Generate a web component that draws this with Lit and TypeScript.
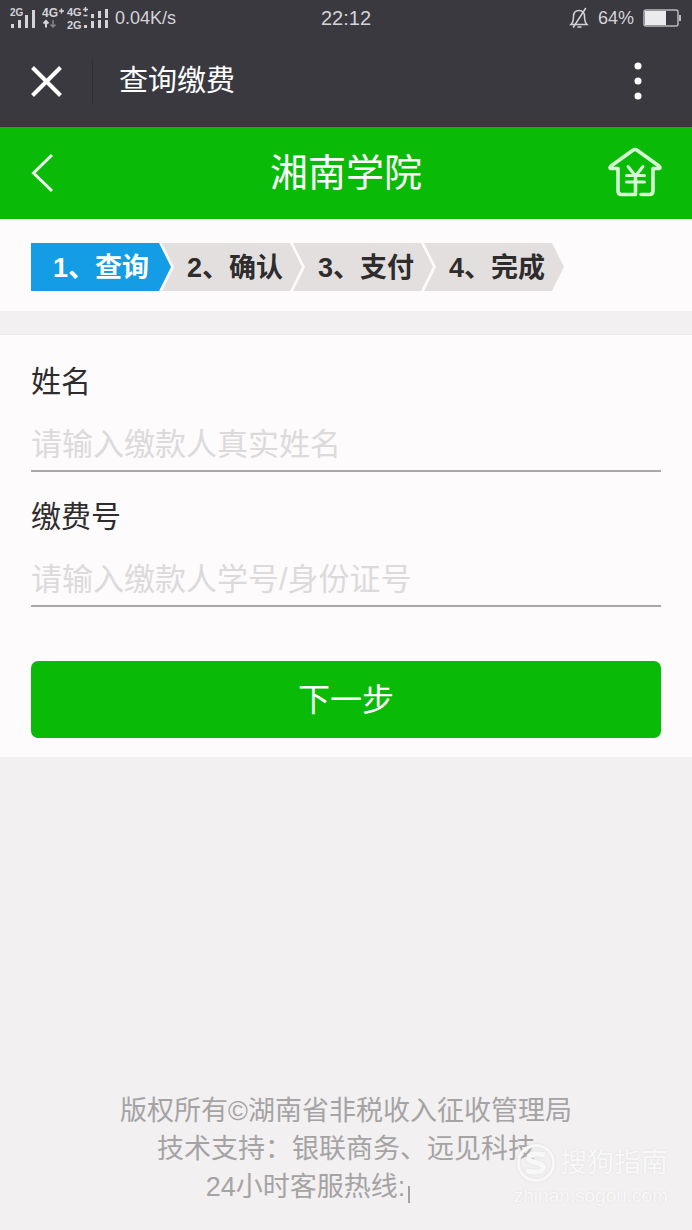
import { LitElement, html, css, svg } from "lit";
import { customElement, property, state } from "lit/decorators.js";
import { classMap } from "lit/directives/class-map.js";

@customElement("status-bar")
class StatusBar extends LitElement {
  static styles = css`
    :host {
      display: flex;
      align-items: center;
      height: 36px;
      padding: 0 10px;
      color: #d4d3d8;
      font-size: 18px;
      line-height: 24px;
    }
    .side {
      flex: 1;
      display: flex;
      align-items: center;
      gap: 6px;
    }
    .right {
      justify-content: flex-end;
      gap: 9px;
    }
    .clock {
      font-size: 20px;
    }
    svg {
      display: block;
      font-family: "Liberation Sans", Arial, sans-serif;
      font-weight: bold;
    }
  `;

  render() {
    const bars = [
      [1, 21, 4],
      [8, 17, 8],
      [15, 12, 13],
      [22, 7, 18],
    ];
    return html`
      <div class="side">
        <svg width="99" height="30" viewBox="0 0 99 30" fill="#d4d3d8" aria-label="信号">
          <text x="0" y="13" font-size="10">2G</text>
          ${bars.map(([x, y, h]) => svg`<rect x=${x} y=${y} width="3" height=${h}></rect>`)}
          <text x="32" y="14" font-size="12">4G</text>
          <path d="M49 8h5M51.5 5.500v5" stroke="#d4d3d8" stroke-width="1.500" />
          <path d="M36 24.500v-6M33.500 20.500l2.500-2.500 2.500 2.500" fill="none" stroke="#d4d3d8" stroke-width="2" />
          <path d="M43 17v6M40.500 21.500l2.500 2.500 2.500-2.500" fill="none" stroke="#85848a" stroke-width="1.500" />
          <text x="57" y="13" font-size="11">4G</text>
          <text x="57" y="26" font-size="11">2G</text>
          <path d="M73 6.500h5M75.500 4v5M73.500 12.500h4" stroke="#d4d3d8" stroke-width="1.500" />
          <rect x="74" y="22" width="3" height="3"></rect>
          <rect x="81" y="11" width="3" height="4"></rect>
          <rect x="81" y="18" width="3" height="7"></rect>
          <rect x="88" y="8" width="3" height="7"></rect>
          <rect x="88" y="17" width="3" height="8"></rect>
          <rect x="95" y="6" width="3" height="9"></rect>
          <rect x="95" y="17" width="3" height="8"></rect>
        </svg>
        <span>0.04K/s</span>
      </div>
      <span class="clock">22:12</span>
      <div class="side right">
        <svg width="20" height="22" viewBox="0 0 20 22" fill="none" stroke="#d4d3d8" stroke-width="1.500" stroke-linecap="round" aria-label="静音">
          <path d="M2 17.500h16c-2-2-2.500-4-2.500-8 0-4-2-6-5.500-6s-5.500 2-5.500 6c0 4-.5 6-2.500 8z" />
          <path d="M9 20h3M16.500 1.500l-12 18.500" />
        </svg>
        <span>64%</span>
        <svg width="39" height="18" viewBox="0 0 39 18" aria-label="电量">
          <rect x="1" y="1" width="34" height="16" rx="2" fill="none" stroke="#b9b8bd" stroke-width="1.500" />
          <rect x="2" y="2" width="21" height="14" fill="#ebebed" />
          <rect x="36" y="6" width="2" height="6" fill="#b9b8bd" />
        </svg>
      </div>
    `;
  }
}

@customElement("step-trail")
class StepTrail extends LitElement {
  static styles = css`
    :host {
      display: block;
      padding: 24px 31px 20px;
    }
    ol {
      display: flex;
      margin: 0;
      padding: 0;
      list-style: none;
    }
    li {
      box-sizing: border-box;
      flex: 0 1 140px;
      height: 48px;
      line-height: 50px;
      padding-left: 6px;
      text-align: center;
      white-space: nowrap;
      font-size: 27px;
      font-weight: bold;
      color: #2e2c2d;
      background: #e2dfde;
      clip-path: polygon(0 0, calc(100% - 12px) 0, 100% 50%, calc(100% - 12px) 100%, 0 100%, 12px 50%);
    }
    li + li {
      margin-left: -9px;
    }
    li.current {
      padding-left: 0;
      color: #fff;
      background: #149de4;
      clip-path: polygon(0 0, calc(100% - 12px) 0, 100% 50%, calc(100% - 12px) 100%, 0 100%);
    }
  `;

  @property({ type: Number }) current = 0;
  @property({ attribute: false }) steps: string[] = [];

  render() {
    return html`<ol>
      ${this.steps.map(
        (name, i) => html`<li class=${classMap({ current: i === this.current })}>${i + 1}、${name}</li>`
      )}
    </ol>`;
  }
}

@customElement("app-root")
class AppRoot extends LitElement {
  static styles = css`
    :host {
      box-sizing: border-box;
      position: relative;
      display: flex;
      flex-direction: column;
      min-height: 100vh;
      background: #f2f0f1;
      color: #2e2c2d;
      font-family: "Liberation Sans", "Noto Sans CJK SC", sans-serif;
    }
    button,
    input {
      font: inherit;
      border: 0;
      padding: 0;
      margin: 0;
      background: none;
      cursor: pointer;
    }
    svg {
      display: block;
    }
    .chrome {
      background: #3a393f;
      border-bottom: 1px solid #38303a;
      color: #fff;
    }
    .titlebar {
      display: flex;
      align-items: center;
      height: 90px;
      padding: 0 31px;
    }
    .titlebar h1 {
      flex: 1;
      margin: 0;
      padding-left: 26px;
      font-size: 29px;
      line-height: 40px;
      font-weight: normal;
    }
    .rule {
      width: 1px;
      height: 46px;
      margin-left: 30px;
      background: #303036;
    }
    .more {
      padding-right: 18px;
    }
    .school {
      display: grid;
      grid-template-columns: 54px 1fr 54px;
      align-items: center;
      height: 92px;
      padding: 0 30px;
      background: #09bb07;
      color: #fff;
    }
    .school h2 {
      margin: 0;
      text-align: center;
      font-size: 38px;
      line-height: 48px;
      font-weight: normal;
    }
    .card {
      background: #fdfbfc;
    }
    form {
      display: flex;
      flex-direction: column;
      margin-top: 23px;
      padding: 27px 31px 19px;
      border-top: 1px solid #ebe9ea;
    }
    .field {
      display: flex;
      flex-direction: column;
      gap: 14px;
      margin-bottom: 25px;
    }
    label {
      font-size: 30px;
      line-height: 40px;
    }
    .field input {
      width: 100%;
      height: 56px;
      box-sizing: border-box;
      padding-top: 4px;
      border-bottom: 2px solid #a9a7a8;
      border-radius: 0;
      font-size: 31px;
      outline: none;
      cursor: text;
    }
    input::placeholder {
      color: #dcdadb;
      opacity: 1;
    }
    .next {
      height: 77px;
      margin-top: 29px;
      border-radius: 7px;
      background: #09bb07;
      color: #fff;
      font-size: 32px;
      line-height: 40px;
    }
    footer {
      margin-top: auto;
      padding-bottom: 24px;
      text-align: center;
      font-size: 27px;
      line-height: 38px;
      color: #a5a3a4;
    }
    footer p {
      margin: 0;
    }
    .hotline {
      padding-right: 76px;
    }
    .caret {
      display: inline-block;
      width: 2px;
      height: 17px;
      margin-left: 3px;
      vertical-align: -7px;
      background: #a5a3a4;
    }
    .watermark {
      position: absolute;
      right: 24px;
      bottom: 22px;
      color: #f9f8f9;
      text-shadow: 0 0 2px #dddbdc;
      text-align: right;
      font-size: 19px;
      line-height: 24px;
      pointer-events: none;
    }
    .brand {
      display: flex;
      align-items: center;
      justify-content: flex-end;
      gap: 4px;
      font-size: 27px;
      line-height: 42px;
    }
    .brand svg {
      filter: drop-shadow(0 0 1px #dddbdc);
    }
  `;

  @state() private payer = "";
  @state() private account = "";

  render() {
    return html`
      <div class="chrome">
        <status-bar></status-bar>
        <header class="titlebar">
          <button type="button" aria-label="关闭">
            <svg width="31" height="31" viewBox="0 0 31 31" stroke="#fff" stroke-width="4">
              <path d="M1.500 1.500l28 28M29.500 1.500l-28 28" />
            </svg>
          </button>
          <span class="rule"></span>
          <h1>查询缴费</h1>
          <button type="button" class="more" aria-label="更多">
            <svg width="10" height="38" viewBox="0 0 10 38" fill="#fff">
              <circle cx="5" cy="4" r="3.500" />
              <circle cx="5" cy="19" r="3.500" />
              <circle cx="5" cy="34" r="3.500" />
            </svg>
          </button>
        </header>
      </div>
      <div class="school">
        <button type="button" aria-label="返回">
          <svg width="26" height="40" viewBox="0 0 26 40" fill="none" stroke="#eefbee" stroke-width="3">
            <path d="M22 2L3.500 20L22 38" />
          </svg>
        </button>
        <h2>湘南学院</h2>
        <button type="button" aria-label="首页">
          <svg width="54" height="52" viewBox="0 0 54 52" fill="none" stroke="#d6f8d3" stroke-width="3.600" stroke-linecap="round" stroke-linejoin="round">
            <path d="M27.500 47.500V31M27.500 47.500H13.500Q10 47.500 10 44V21.500H3Q1 21 3 19L24.500 3.500Q27 1.500 29.500 3.500L51 19Q53 21 51 21.500H45V44Q45 47.500 41.500 47.500H33" />
            <path d="M20 19.500L27.500 29L35 19.500M27.500 29V40M18.500 28.500H36.500M18.500 35H36.500" stroke-width="3" />
          </svg>
        </button>
      </div>
      <step-trail class="card" .steps=${["查询", "确认", "支付", "完成"]} .current=${0}></step-trail>
      <form class="card" @submit=${(e: Event) => e.preventDefault()}>
        <div class="field">
          <label for="payer">姓名</label>
          <input
            id="payer"
            type="text"
            placeholder="请输入缴款人真实姓名"
            .value=${this.payer}
            @input=${(e: Event) => (this.payer = (e.target as HTMLInputElement).value)}
          />
        </div>
        <div class="field">
          <label for="account">缴费号</label>
          <input
            id="account"
            type="text"
            placeholder="请输入缴款人学号/身份证号"
            .value=${this.account}
            @input=${(e: Event) => (this.account = (e.target as HTMLInputElement).value)}
          />
        </div>
        <button type="submit" class="next">下一步</button>
      </form>
      <footer>
        <p>版权所有©湖南省非税收入征收管理局</p>
        <p>技术支持：银联商务、远见科技</p>
        <p class="hotline">24小时客服热线:<span class="caret"></span></p>
      </footer>
      <div class="watermark">
        <div class="brand">
          <svg width="40" height="40" viewBox="0 0 40 40" fill="none" stroke="#f9f8f9">
            <circle cx="20" cy="20" r="17.500" stroke-width="3" />
            <path d="M29 12Q14 9 12.500 15C12 20 28 19 27.500 25Q26 31 10 28" stroke-width="5" />
          </svg>
          搜狗指南
        </div>
        <div>zhinan.sogou.com</div>
      </div>
    `;
  }
}
